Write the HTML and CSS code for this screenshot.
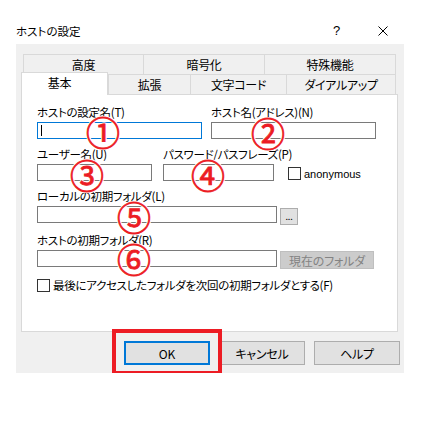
FILE: index.html
```html
<!DOCTYPE html>
<html lang="ja">
<head>
  <meta charset="UTF-8">
  <title>ホストの設定</title>
  <link rel="stylesheet" href="styles.css">
</head>
<body>
  <div class="dialog">
    <div class="titlebar">
      <span class="title">ホストの設定</span>
      <span class="help">?</span>
      <span class="close">
        <svg width="10" height="10" viewBox="0 0 10 10"><path d="M0.5 0.5 L9.5 9.5 M9.5 0.5 L0.5 9.5" stroke="#000" stroke-width="1" fill="none"/></svg>
      </span>
    </div>

    <div class="body">
      <div class="tabs">
        <div class="tab-row back">
          <div class="tab">高度</div>
          <div class="tab">暗号化</div>
          <div class="tab last">特殊機能</div>
        </div>
        <div class="tab-row front">
          <div class="tab selected">基本</div>
          <div class="tab">拡張</div>
          <div class="tab">文字コード</div>
          <div class="tab last">ダイアルアップ</div>
        </div>
      </div>

      <div class="panel">
        <div class="row row-host">
          <div class="field">
            <div class="label">ホストの設定名(T)</div>
            <div class="box focused"><span class="caret"></span></div>
          </div>
          <div class="field">
            <div class="label">ホスト名(アドレス)(N)</div>
            <div class="box"></div>
          </div>
        </div>

        <div class="row row-user">
          <div class="field">
            <div class="label">ユーザー名(U)</div>
            <div class="box"></div>
          </div>
          <div class="field">
            <div class="label">パスワード/パスフレーズ(P)</div>
            <div class="box"></div>
          </div>
          <label class="check anon">
            <span class="check-box"></span>
            <span class="check-text latin">anonymous</span>
          </label>
        </div>

        <div class="row">
          <div class="field wide">
            <div class="label">ローカルの初期フォルダ(L)</div>
            <div class="box-line">
              <div class="box long"></div>
              <button type="button" class="btn browse">...</button>
            </div>
          </div>
        </div>

        <div class="row">
          <div class="field wide">
            <div class="label">ホストの初期フォルダ(R)</div>
            <div class="box-line">
              <div class="box long"></div>
              <button type="button" class="btn current" disabled>現在のフォルダ</button>
            </div>
          </div>
        </div>

        <label class="check last-folder">
          <span class="check-box"></span>
          <span class="check-text">最後にアクセスしたフォルダを次回の初期フォルダとする(F)</span>
        </label>

        <span class="mark m1">①</span>
        <span class="mark m2">②</span>
        <span class="mark m3">③</span>
        <span class="mark m4">④</span>
        <span class="mark m5">⑤</span>
        <span class="mark m6">⑥</span>
      </div>

      <div class="actions">
        <div class="ok-wrap">
          <button type="button" class="btn action default">OK</button>
          <span class="highlight"></span>
        </div>
        <button type="button" class="btn action">キャンセル</button>
        <button type="button" class="btn action">ヘルプ</button>
      </div>
    </div>
  </div>
</body>
</html>
```

FILE: styles.css
```css
body {
  margin: 0;
  background-color: white;
  font-family: "Noto Sans CJK JP", "Noto Sans", sans-serif;
  font-size: 11.5px;
  letter-spacing: -0.3px;
  font-feature-settings: "palt";
  color: #000;
}
.dialog {
  margin-left: 16px;
  width: 388px;
}
.titlebar {
  height: 44px;
  display: flex;
  align-items: center;
  padding-top: 17px;
  box-sizing: border-box;
}
.titlebar .title {
  font-size: 11.5px;
  letter-spacing: 0;
}
.titlebar .help {
  margin-left: auto;
  font-family: "Liberation Sans", sans-serif;
  font-size: 13px;
  margin-right: 38px;
}
.titlebar .close {
  display: flex;
  margin-right: 16px;
}
.body {
  background-color: #f0f0f0;
  padding: 10px 6px 8px 5px;
}

/* tabs */
.tabs {
  padding: 0 2px;
}
.tab-row {
  display: grid;
  height: 20px;
}
.tab-row.back {
  grid-template-columns: 120px 121px 1fr;
}
.tab-row.front {
  grid-template-columns: 85px 82px 96px 1fr;
}
.tab {
  border-top: 1px solid #d9d9d9;
  border-left: 1px solid #d9d9d9;
  display: flex;
  align-items: center;
  justify-content: center;
  line-height: 18px;
  font-size: 12px;
}
.tab.last {
  border-right: 1px solid #d9d9d9;
}
.tab.selected {
  position: relative;
  z-index: 2;
  background-color: white;
  margin: -2px 0 -1px -2px;
  border-right: 1px solid #d9d9d9;
  padding-right: 10px;
  padding-bottom: 2px;
}

/* panel */
.panel {
  position: relative;
  background-color: white;
  border: 1px solid #d9d9d9;
  height: 238px;
  box-sizing: border-box;
  padding: 10px 0 0 15px;
}
.row {
  display: flex;
  align-items: flex-end;
  margin-bottom: 8px;
}
.row-host {
  gap: 9px;
}
.row-host .field {
  width: 165px;
}
.row-user .field:first-child {
  width: 115px;
  margin-right: 11px;
}
.row-user .field:nth-child(2) {
  width: 111px;
  margin-right: 14px;
}
.label {
  height: 15px;
  line-height: 15px;
  margin-bottom: 2px;
  white-space: nowrap;
}
.box {
  height: 17px;
  box-sizing: border-box;
  border: 1px solid #7a7a7a;
  background-color: white;
  display: flex;
  align-items: center;
}
.box.focused {
  border-color: #0078d7;
}
.caret {
  width: 1px;
  height: 11px;
  margin-left: 3px;
  background-color: #000;
}
.box-line {
  display: flex;
  align-items: flex-start;
  gap: 3px;
}
.box.long {
  width: 240px;
}
.btn {
  font-family: inherit;
  font-size: 12px;
  font-feature-settings: "palt";
  letter-spacing: -0.2px;
  color: #000;
  background-color: #e1e1e1;
  border: 1px solid #adadad;
  padding: 0;
  margin: 0;
  box-sizing: border-box;
}
.btn.browse {
  width: 18px;
  height: 17px;
  margin-top: 2px;
  font-size: 9px;
  line-height: 12px;
}
.btn.current {
  width: 94px;
  height: 18px;
  margin-top: 1px;
  background-color: #cccccc;
  border-color: #bfbfbf;
  color: #838383;
}

/* checkboxes */
.check {
  display: flex;
  align-items: center;
}
.check-box {
  width: 13px;
  height: 13px;
  box-sizing: border-box;
  border: 1px solid #333;
  background-color: white;
}
.check-text {
  margin-left: 3px;
}
.latin {
  font-family: "Liberation Sans", sans-serif;
  font-size: 11px;
  letter-spacing: 0;
}
.anon {
  margin-bottom: 1px;
}
.last-folder {
  margin-top: 6px;
}

/* red markers laid over the form */
.mark {
  position: absolute;
  width: 32px;
  height: 32px;
  line-height: 32px;
  text-align: center;
  font-family: "Noto Sans CJK JP", serif;
  font-weight: normal;
  font-size: 34px;
  letter-spacing: 0;
  color: #ec1c24;
  -webkit-text-stroke: 0.8px #ec1c24;
  text-shadow: 1px 0 0 #fff, -1px 0 0 #fff, 0 1px 0 #fff, 0 -1px 0 #fff,
    1px 1px 0 #fff, -1px -1px 0 #fff, 1px -1px 0 #fff, -1px 1px 0 #fff;
}
.m1 { left: 64px; top: 21px; }
.m2 { left: 229px; top: 22px; }
.m3 { left: 48px; top: 64px; }
.m4 { left: 169px; top: 64px; }
.m5 { left: 95px; top: 106px; }
.m6 { left: 95px; top: 148px; }

/* buttons */
.actions {
  display: flex;
  justify-content: flex-end;
  gap: 9px;
  margin-top: 9px;
  margin-right: -2px;
}
.btn.action {
  width: 86px;
  height: 24px;
}
.btn.default {
  border: 2px solid #0078d7;
}
.ok-wrap {
  position: relative;
  display: flex;
}
.highlight {
  position: absolute;
  left: -12px;
  top: -12px;
  right: -12px;
  bottom: -10px;
  border: 4px solid #ed1c24;
}
```
